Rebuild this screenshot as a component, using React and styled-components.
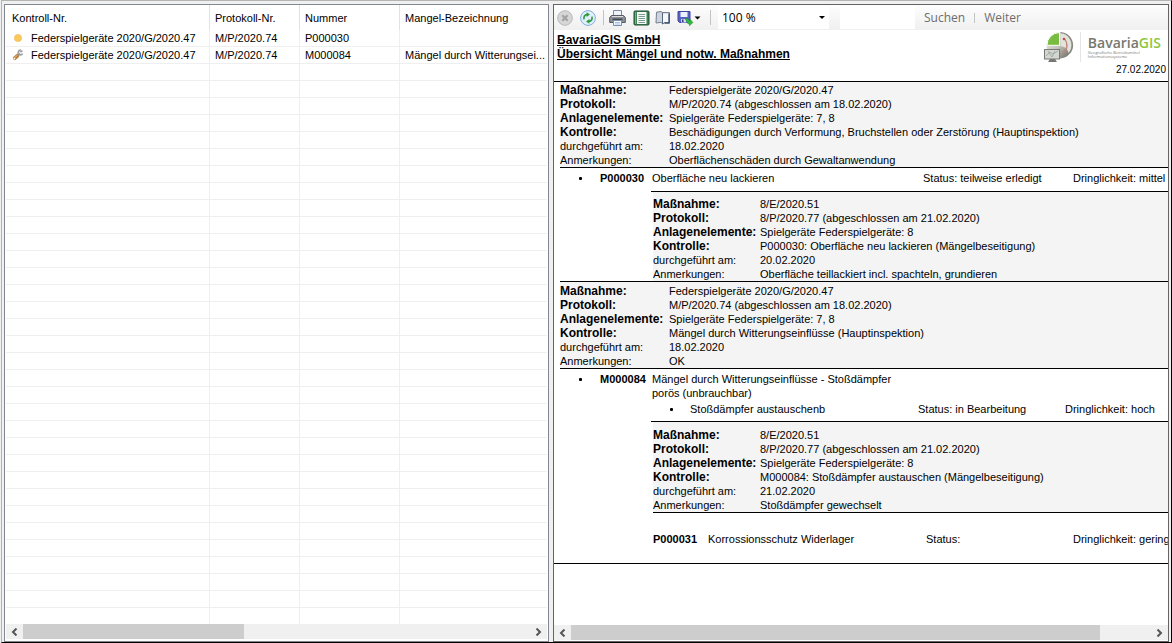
import React from "react";
import styled, { createGlobalStyle } from "styled-components";

const GlobalStyle = createGlobalStyle`
  * {
    box-sizing: border-box;
  }
  body {
    margin: 0;
    background: #f0f0f0;
    color: #000;
    font: 11px/14px "Liberation Sans", Arial, sans-serif;
  }
  button, input, select {
    font: inherit;
    color: inherit;
    border: 0;
    padding: 0;
    margin: 0;
    background: none;
  }
`;

const Window = styled.main`
  height: 100vh;
  display: grid;
  grid-template-columns: minmax(0, 545fr) minmax(0, 616fr);
  grid-template-rows: minmax(0, 1fr);
  gap: 4px;
  margin-left: 1px;
  padding: 3px 2px 0 2px;
  border: 1px solid #b4b4b4;
  border-right-color: #000;
  border-bottom-color: #000;
`;

const Panel = styled.section`
  display: flex;
  flex-direction: column;
  min-width: 0;
  background: #fff;
  border: 1px solid ${(p) => p.$edge};
  padding-bottom: 1px;
`;

const ListPanel = styled(Panel)`
  padding: 0 1px 2px;
`;

const TableArea = styled.div`
  flex: 1;
  min-height: 0;
  overflow: hidden;
`;

const Table = styled.table`
  width: 100%;
  table-layout: fixed;
  border-collapse: separate;
  border-spacing: 0;
`;

const HeadCell = styled.th`
  height: 25px;
  width: ${(p) => (p.$width ? `${p.$width}px` : "auto")};
  padding: 0 0 0 ${(p) => (p.$first ? 6 : 5)}px;
  text-align: left;
  font-weight: normal;
  border-right: 1px solid #e2e2e2;
  &:last-child {
    border-right: 0;
  }
`;

const Cell = styled.td`
  height: 17px;
  padding: 0 0 0 5px;
  border-right: 1px solid #efefef;
  border-bottom: 1px solid #efefef;
  white-space: nowrap;
  &:last-child {
    border-right: 0;
  }
`;

const NameCell = styled.div`
  display: grid;
  grid-template-columns: 14px auto;
  gap: 6px;
  align-items: center;
  height: 16px;
`;

const Scrollbar = styled.div`
  display: grid;
  grid-template-columns: 17px 1fr 17px;
  height: 15px;
  background: #f0f0f0;
`;

const ScrollButton = styled.button`
  display: flex;
  align-items: center;
  justify-content: center;
`;

const Thumb = styled.div`
  width: ${(p) => p.$size}%;
  background: #cdcdcd;
`;

const Toolbar = styled.div`
  display: flex;
  align-items: center;
  height: 25px;
  padding-left: 3px;
  background: linear-gradient(#fdfdfd, #f0f0f0);
  font: 12px/16px "Open Sans", "Noto Sans", sans-serif;
`;

const Tool = styled.button`
  display: flex;
  align-items: center;
  justify-content: center;
  width: ${(p) => p.$width || 23}px;
  height: 22px;
`;

const Divider = styled.span`
  width: 1px;
  height: ${(p) => p.$height || 15}px;
  margin: 0 ${(p) => p.$gap}px;
  background: #c3c3c3;
`;

const ZoomBox = styled.div`
  display: flex;
  align-items: center;
  width: 111px;
  height: 23px;
  padding-right: 4px;
  background: #fff;
`;

const ZoomSelect = styled.select`
  flex: 1;
  height: 23px;
  padding-left: 4px;
  appearance: none;
`;

const SearchInput = styled.input`
  width: 75px;
  height: 23px;
  margin: 0 9px 0 11px;
  background: #fff;
`;

const TextButton = styled.button`
  color: #6d6d6d;
`;

const Report = styled.article`
  flex: 1;
  min-height: 0;
  overflow: hidden;
`;

const ReportHeader = styled.header`
  display: flex;
  justify-content: space-between;
  padding: 0 2px 4px 3px;
  border-bottom: 1px solid #000;
`;

const Title = styled.h1`
  margin: 3px 0 0;
  font-size: 12px;
  line-height: 14px;
  font-weight: bold;
  text-decoration: underline;
`;

const Brand = styled.div`
  text-align: right;
`;

const Logo = styled.div`
  display: flex;
  align-items: center;
  height: 33px;
  padding-right: 5px;
  text-align: left;
`;

const LogoText = styled.div`
  margin-left: 6px;
  padding-left: 7px;
  border-left: 1px solid #e4e4e4;
  height: 30px;
`;

const LogoName = styled.div`
  padding-top: 2px;
  font: 600 14px/17px "Open Sans", "Noto Sans", sans-serif;
  color: #777771;
  span {
    color: #8cc63f;
  }
`;

const LogoLine = styled.div`
  font: 4px/4px "Open Sans", "Noto Sans", sans-serif;
  color: #77776f;
`;

const ReportDate = styled.time`
  display: block;
  font-size: 10px;
  line-height: 14px;
`;

const ReportBody = styled.div`
  padding: 0 0 17px 6px;
  border-bottom: 1px solid #000;
  white-space: nowrap;
`;

const Fields = styled.dl`
  display: grid;
  grid-template-columns: ${(p) => (p.$nested ? 107 : 109)}px auto;
  margin: 0 0 0 ${(p) => (p.$nested ? 2 : 0)}px;
  padding-top: ${(p) => p.$top}px;
  background: #f4f4f4;
  border-bottom: ${(p) => (p.$closed ? "1px solid #000" : 0)};
`;

const Label = styled.dt`
  font-size: ${(p) => (p.$bold ? 12 : 11)}px;
  font-weight: ${(p) => (p.$bold ? "bold" : "normal")};
`;

const Value = styled.dd`
  margin: 0;
`;

const Nested = styled.div`
  margin-left: 91px;
  border-top: 1px solid #000;
`;

const Separator = styled.hr`
  margin: 0;
  border: 0;
  border-top: 1px solid #000;
`;

const Finding = styled.div`
  display: grid;
  grid-template-columns: 40px 52px 271px 150px auto;
  padding: 3px 0 ${(p) => (p.$compact ? 2 : 6)}px;
`;

const Measure = styled.div`
  display: grid;
  grid-template-columns: 38px 228px 147px auto;
  margin-left: 92px;
  padding-bottom: 5px;
`;

const LastFinding = styled.div`
  display: grid;
  grid-template-columns: 55px 218px 147px auto;
  margin: 19px 0 0 93px;
`;

const Bullet = styled.span`
  display: flex;
  align-items: center;
  justify-content: center;
  height: 14px;
  &::before {
    content: "";
    width: 3px;
    height: 3px;
    border-radius: 1px;
    background: #000;
  }
`;

const Number = styled.b`
  font-size: 11px;
`;

const Description = styled.span`
  max-width: 245px;
  white-space: normal;
`;

const rows = [
  ["dot", "Federspielgeräte 2020/G/2020.47", "M/P/2020.74", "P000030", ""],
  ["tool", "Federspielgeräte 2020/G/2020.47", "M/P/2020.74", "M000084", "Mängel durch Witterungsei..."],
];
const emptyRows = Array.from({ length: 33 });

const labels = [
  "Maßnahme:",
  "Protokoll:",
  "Anlagenelemente:",
  "Kontrolle:",
  "durchgeführt am:",
  "Anmerkungen:",
];

const inspectionOne = [
  "Federspielgeräte 2020/G/2020.47",
  "M/P/2020.74 (abgeschlossen am 18.02.2020)",
  "Spielgeräte Federspielgeräte: 7, 8",
  "Beschädigungen durch Verformung, Bruchstellen oder Zerstörung (Hauptinspektion)",
  "18.02.2020",
  "Oberflächenschäden durch Gewaltanwendung",
];
const repairOne = [
  "8/E/2020.51",
  "8/P/2020.77 (abgeschlossen am 21.02.2020)",
  "Spielgeräte Federspielgeräte: 8",
  "P000030: Oberfläche neu lackieren (Mängelbeseitigung)",
  "20.02.2020",
  "Oberfläche teillackiert incl. spachteln, grundieren",
];
const inspectionTwo = [
  "Federspielgeräte 2020/G/2020.47",
  "M/P/2020.74 (abgeschlossen am 18.02.2020)",
  "Spielgeräte Federspielgeräte: 7, 8",
  "Mängel durch Witterungseinflüsse (Hauptinspektion)",
  "18.02.2020",
  "OK",
];
const repairTwo = [
  "8/E/2020.51",
  "8/P/2020.77 (abgeschlossen am 21.02.2020)",
  "Spielgeräte Federspielgeräte: 8",
  "M000084: Stoßdämpfer austauschen (Mängelbeseitigung)",
  "21.02.2020",
  "Stoßdämpfer gewechselt",
];

const RowIcon = ({ kind }) =>
  kind === "dot" ? (
    <svg width="14" height="14" viewBox="0 0 14 14">
      <circle cx="7" cy="7" r="3.6" fill="#f9c95c" stroke="#eeb64a" strokeWidth=".6" />
    </svg>
  ) : (
    <svg width="14" height="14" viewBox="0 0 14 14">
      <path d="M3.8 10.2l2.6-2.4" stroke="#b9803f" strokeWidth="3.8" strokeLinecap="round" />
      <path d="M3.6 9.6l2.4-2.2" stroke="#dba561" strokeWidth="1.3" strokeLinecap="round" />
      <path d="M6.6 7.2l2-1.8" stroke="#8f8f8f" strokeWidth="2.2" />
      <path
        d="M9.8 2.2a2.3 2.3 0 1 0 1.800 3.4M9.4 4.2l2-1.600"
        fill="none"
        stroke="#a0a0a0"
        strokeWidth="1.7"
      />
      <circle cx="3.4" cy="10.6" r=".9" fill="#fff" />
    </svg>
  );

const StopIcon = () => (
  <svg width="16" height="16" viewBox="0 0 16 16">
    <circle cx="8" cy="8" r="7.3" fill="#d6d6d6" stroke="#b8b8b8" />
    <path d="M5.3 5.3l5.4 5.4M10.7 5.3l-5.4 5.4" stroke="#a2a2a2" strokeWidth="2.2" />
  </svg>
);

const RefreshIcon = () => (
  <svg width="16" height="16" viewBox="0 0 16 16">
    <circle cx="8" cy="8" r="7.4" fill="#e1effb" stroke="#82aede" />
    <path
      d="M4 9.4c-.4-2.800.6-4.600 3-4.800M12 6.600c.4 2.800-.6 4.600-3 4.800"
      fill="none"
      stroke="#2c9a3c"
      strokeWidth="1.6"
    />
    <path d="M6.600 2.200L10 4.600 6.600 7zM9.400 13.800L6 11.400 9.400 9z" fill="#2c9a3c" />
  </svg>
);

const PrintIcon = () => (
  <svg width="17" height="16" viewBox="0 0 17 16">
    <path d="M4.5.5h8v6h-8z" fill="#edf4fb" stroke="#7f8c9b" />
    <path d="M2.5 5.5h12l1.8 2v5H.7v-5z" fill="#8d9299" stroke="#555b63" />
    <path d="M3 6.5h11" stroke="#d9dde1" />
    <path d="M3.5 8.5h10v2h-10z" fill="#474c53" />
    <path d="M4.5 10.5h8v5h-8z" fill="#f4f9fe" stroke="#7291b2" />
    <path d="M6 12.5h5M6 14h5" stroke="#a8c4e2" />
  </svg>
);

const LayoutIcon = () => (
  <svg width="17" height="16" viewBox="0 0 17 16">
    <rect x="1" y="1" width="15" height="14" rx="1" fill="#3f8353" stroke="#1f4d37" />
    <path d="M4 2h9.5v12H4z" fill="#f5faf5" />
    <path d="M5.5 4.5h6.5M5.5 6.5h6.5M5.5 8.5h6.5M5.5 10.5h6.5M5.5 12.5h6.5" stroke="#7c9d95" />
    <path d="M2.5 2v12" stroke="#79b37f" />
  </svg>
);

const BookIcon = () => (
  <svg width="16" height="15" viewBox="0 0 16 15">
    <path d="M1.5 2.2L6 1.5l1.5 1.2v11L6 12.3l-5 .7z" fill="#cbd4e0" stroke="#767f8c" />
    <path d="M7.5 2.7h7v10h-5l-2 1.3z" fill="#f5f8fc" stroke="#59677c" />
    <path d="M14 3.4v9.6H9.5" fill="none" stroke="#425673" strokeWidth="1.4" />
  </svg>
);

const SaveIcon = () => (
  <svg width="24" height="16" viewBox="0 0 24 16">
    <path d="M1 1.5h12v11H2.5L1 11z" fill="#5862c2" stroke="#3d459e" />
    <path d="M3.5 2h7v5h-7z" fill="#edf1ff" />
    <path d="M4 9h5.5v3.5H4z" fill="#d4d9f4" />
    <path d="M5 9.5h1.5v2.5H5z" fill="#343a88" />
    <path
      d="M8 8.4h2.2l2.3 2.2V8.8l3.4 3.6-3.4 3.4v-2H11z"
      fill="#2cbb3b"
      stroke="#168028"
      strokeWidth=".5"
    />
    <path d="M17.5 6.5h6L20.5 9.5z" fill="#000" />
  </svg>
);

const BrandIcon = () => (
  <svg width="31" height="32" viewBox="0 0 31 32">
    <defs>
      <linearGradient id="globe" x1="0" y1="0" x2="1" y2="1">
        <stop offset="0" stopColor="#f3f3ef" />
        <stop offset=".5" stopColor="#c4c4bc" />
        <stop offset="1" stopColor="#5c5c56" />
      </linearGradient>
    </defs>
    <circle cx="16.5" cy="14.5" r="13" fill="url(#globe)" />
    <path d="M17.5 2c7 1 11 6 11 12 0 3-1 6-3 8-1-4-3-6-8-7z" fill="#e3e3dd" />
    <path d="M17.5 1.6a12.8 12.8 0 0 1 9.5 20.2" fill="none" stroke="#88887f" strokeWidth="1.4" />
    <path d="M16.5 1.5v12.8H4a12.6 12.6 0 0 1 12.5-12.8z" fill="#78bd42" stroke="#fff" />
    <path
      d="M21 8c4 4 4 8 1 14M22 8c3 5 2 11-3 15"
      fill="none"
      stroke="#c08074"
      strokeWidth=".9"
    />
    <circle cx="21" cy="8" r="1.3" fill="#b84f43" />
    <rect x="1.5" y="18.5" width="15" height="9.5" fill="#d3d7d2" stroke="#777773" />
    <path d="M3 25l4-4 3 2 5-3M5 20l4 6 3-6" fill="none" stroke="#929a95" strokeWidth=".7" />
    <path d="M7 28h5l2 3H5z" fill="#777773" />
  </svg>
);

const HorizontalScroll = ({ size }) => (
  <Scrollbar>
    <ScrollButton aria-label="Nach links">
      <svg width="7" height="8" viewBox="0 0 7 8">
        <path d="M5.5.5L2 4l3.5 3.5" fill="none" stroke="#555" strokeWidth="2" />
      </svg>
    </ScrollButton>
    <Thumb $size={size} />
    <ScrollButton aria-label="Nach rechts">
      <svg width="7" height="8" viewBox="0 0 7 8">
        <path d="M1.5.5L5 4 1.5 7.5" fill="none" stroke="#555" strokeWidth="2" />
      </svg>
    </ScrollButton>
  </Scrollbar>
);

const FieldList = ({ values, nested, top, closed }) => (
  <Fields $nested={nested} $top={top} $closed={closed}>
    {labels.map((label, i) => (
      <React.Fragment key={label}>
        <Label $bold={i < 4}>{label}</Label>
        <Value>{values[i]}</Value>
      </React.Fragment>
    ))}
  </Fields>
);

const DefectList = () => (
  <ListPanel $edge="#828790">
    <TableArea>
      <Table>
        <thead>
          <tr>
            <HeadCell $width={204} $first>
              Kontroll-Nr.
            </HeadCell>
            <HeadCell $width={90}>Protokoll-Nr.</HeadCell>
            <HeadCell $width={100}>Nummer</HeadCell>
            <HeadCell>Mangel-Bezeichnung</HeadCell>
          </tr>
        </thead>
        <tbody>
          {rows.map(([icon, name, protocol, number, text]) => (
            <tr key={number}>
              <Cell>
                <NameCell>
                  <RowIcon kind={icon} />
                  {name}
                </NameCell>
              </Cell>
              <Cell>{protocol}</Cell>
              <Cell>{number}</Cell>
              <Cell>{text}</Cell>
            </tr>
          ))}
          {emptyRows.map((_, i) => (
            <tr key={i}>
              <Cell />
              <Cell />
              <Cell />
              <Cell />
            </tr>
          ))}
        </tbody>
      </Table>
    </TableArea>
    <HorizontalScroll size={43.6} />
  </ListPanel>
);

const ReportToolbar = () => (
  <Toolbar>
    <Tool aria-label="Abbrechen" $width={16}>
      <StopIcon />
    </Tool>
    <Tool aria-label="Aktualisieren" $width={30}>
      <RefreshIcon />
    </Tool>
    <Divider $gap={0} />
    <Tool aria-label="Drucken" $width={27}>
      <PrintIcon />
    </Tool>
    <Tool aria-label="Drucklayout" $width={20}>
      <LayoutIcon />
    </Tool>
    <Tool aria-label="Seite einrichten" $width={24}>
      <BookIcon />
    </Tool>
    <Tool aria-label="Exportieren" $width={28}>
      <SaveIcon />
    </Tool>
    <Divider $gap={7} />
    <ZoomBox>
      <ZoomSelect aria-label="Zoom" defaultValue="100 %">
        <option>100 %</option>
      </ZoomSelect>
      <svg width="6" height="3" viewBox="0 0 6 3">
        <path d="M0 0h6L3 3z" />
      </svg>
    </ZoomBox>
    <SearchInput aria-label="Suchtext" />
    <TextButton>Suchen</TextButton>
    <Divider $gap={9} $height={10} />
    <TextButton>Weiter</TextButton>
  </Toolbar>
);

const App = () => (
  <>
    <GlobalStyle />
    <Window>
      <DefectList />
      <Panel $edge="#646464">
        <ReportToolbar />
        <Report>
          <ReportHeader>
            <Title>
              BavariaGIS GmbH
              <br />
              Übersicht Mängel und notw. Maßnahmen
            </Title>
            <Brand>
              <Logo>
                <BrandIcon />
                <LogoText>
                  <LogoName>
                    Bavaria<span>GIS</span>
                  </LogoName>
                  <LogoLine>Geografische Betriebsmittel</LogoLine>
                  <LogoLine>Informationssysteme</LogoLine>
                </LogoText>
              </Logo>
              <ReportDate>27.02.2020</ReportDate>
            </Brand>
          </ReportHeader>
          <ReportBody>
            <FieldList values={inspectionOne} top={1} closed />
            <Finding>
              <Bullet />
              <Number>P000030</Number>
              <span>Oberfläche neu lackieren</span>
              <span>Status: teilweise erledigt</span>
              <span>Dringlichkeit: mittel</span>
            </Finding>
            <Nested>
              <FieldList values={repairOne} nested top={5} />
            </Nested>
            <Separator />
            <FieldList values={inspectionTwo} top={2} closed />
            <Finding $compact>
              <Bullet />
              <Number>M000084</Number>
              <Description>
                Mängel durch Witterungseinflüsse - Stoßdämpfer porös (unbrauchbar)
              </Description>
            </Finding>
            <Measure>
              <Bullet />
              <span>Stoßdämpfer austauschenb</span>
              <span>Status: in Bearbeitung</span>
              <span>Dringlichkeit: hoch</span>
            </Measure>
            <Nested>
              <FieldList values={repairTwo} nested top={6} closed />
            </Nested>
            <LastFinding>
              <Number>P000031</Number>
              <span>Korrossionsschutz Widerlager</span>
              <span>Status:</span>
              <span>Dringlichkeit: gering</span>
            </LastFinding>
          </ReportBody>
        </Report>
        <HorizontalScroll size={91.2} />
      </Panel>
    </Window>
  </>
);

export default App;
